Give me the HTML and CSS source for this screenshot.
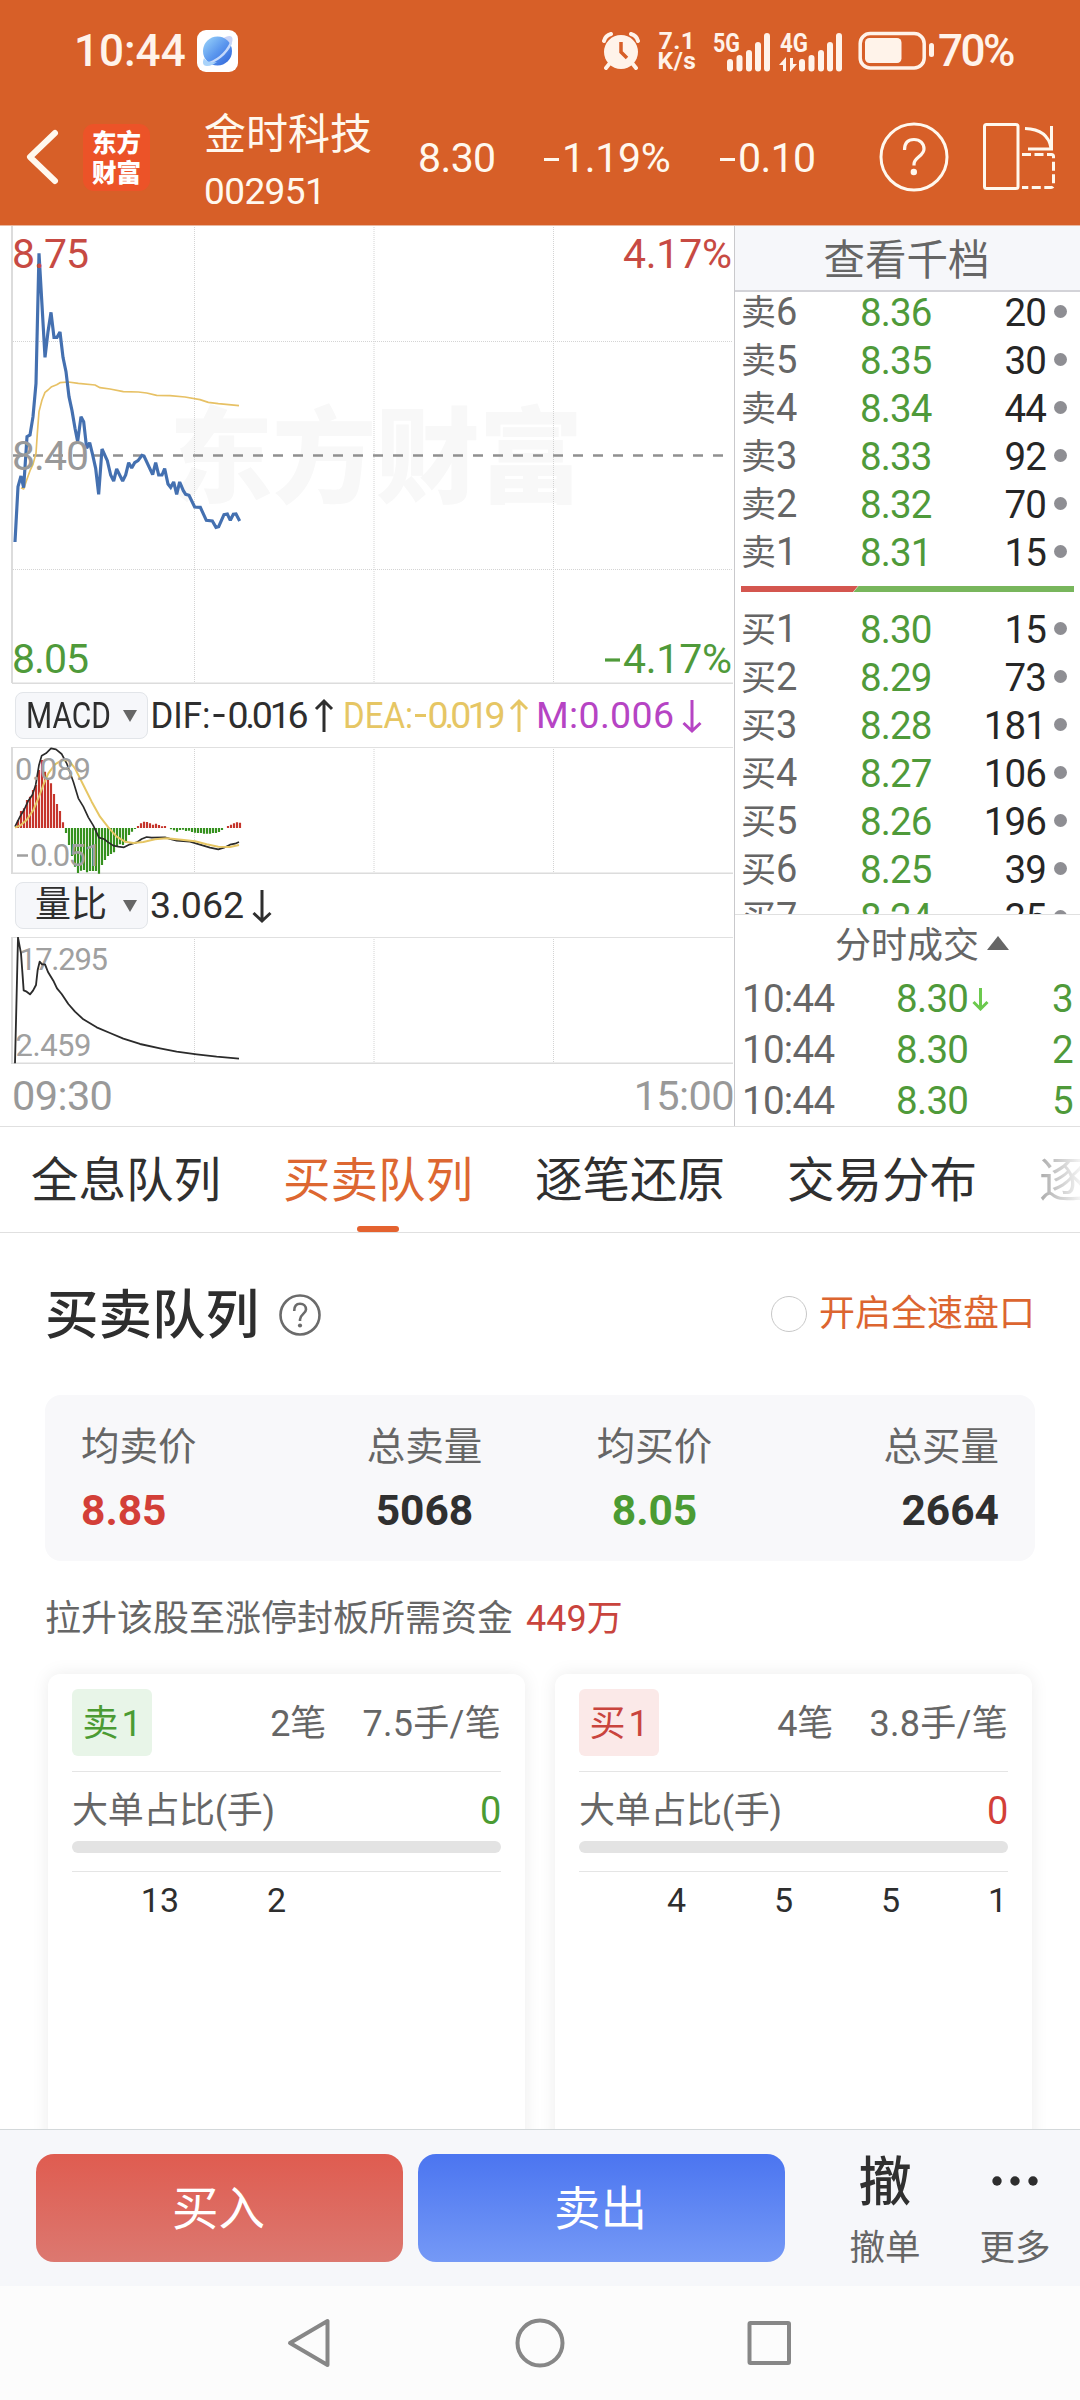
FILE: index.html
```html
<!DOCTYPE html>
<html lang="zh-CN">
<head>
<meta charset="utf-8">
<title>金时科技 002951</title>
<link rel="stylesheet" href="styles.css">
</head>
<body>
<div class="screen">
  <header class="top">
    <div class="status">
      <span class="clock">10:44</span>
      <svg class="app-badge" width="42" height="42" viewBox="0 0 42 42">
        <defs><linearGradient id="planet" x1="0" y1="0" x2="1" y2="1"><stop offset="0" stop-color="#9ed8fb"/><stop offset=".5" stop-color="#5b97ee"/><stop offset="1" stop-color="#2c62d8"/></linearGradient></defs>
        <rect width="41" height="42" rx="9" fill="#fff"/>
        <path d="M25 9C31 5 36 5 35.500 10C35 15 31 20 26 25Z" fill="#c9d4f6"/>
        <circle cx="20.500" cy="21" r="14.500" fill="url(#planet)"/>
        <path d="M34 13C29 24 19 32 8 34" fill="none" stroke="#c4d9fb" stroke-width="2.500"/>
        <path d="M7 28C5 33 6 36 10 36C14 36 17 34 20 32C15 33 9 32 7 28Z" fill="#a9d3fa"/>
      </svg>
      <svg class="alarm" width="38" height="38" viewBox="0 0 38 38">
        <g fill="none" stroke="#fff3ea" stroke-width="4" stroke-linecap="round"><path d="M2 9C3 5 5 3 9 2M29 2C33 3 35 5 36 9M8 31L4 36M30 31L34 36"/></g>
        <circle cx="19" cy="20" r="17" fill="#fff3ea"/>
        <path d="M19 10V20L25 26" fill="none" stroke="#d75f28" stroke-width="3.500"/>
      </svg>
      <span class="speed"><span>7.1</span><span>K/s</span></span>
      <svg class="cell" width="58" height="42" viewBox="712 29 58 42">
        <text x="713" y="51" class="net" textLength="27" lengthAdjust="spacingAndGlyphs">5G</text>
        <path class="bars" d="M730 61V67.500M739.500 57V67.500M749 52V67.500M758 44V67.500M767 35V67.500"/>
      </svg>
      <svg class="cell2" width="65" height="42" viewBox="780 29 65 42">
        <text x="781" y="51" class="net" textLength="28" lengthAdjust="spacingAndGlyphs">4G</text>
        <path class="bars" d="M803 61V67.500M812.500 57V67.500M822 52V67.500M831 44V67.500M840 35V67.500"/>
        <path d="M787 70V56L780 64H784V70ZM791 57V71L798 63H794V57Z" fill="#fff3ea"/>
      </svg>
      <svg class="battery" width="78" height="40" viewBox="857 31 78 40">
        <rect x="860.200" y="33.500" width="64" height="34.500" rx="10" fill="none" stroke="#fff3ea" stroke-width="3.500"/>
        <rect x="865" y="38" width="36.500" height="25" rx="4.500" fill="#fff3ea"/>
        <rect x="929" y="43" width="5" height="14" rx="2.500" fill="#fff3ea"/>
      </svg>
      <span class="percent">70%</span>
    </div>
    <div class="nav">
      <svg class="back" width="36" height="60" viewBox="0 0 36 60"><path d="M31 6L6 30L31 54" fill="none" stroke="#fff8ee" stroke-width="6" stroke-linecap="round" stroke-linejoin="round"/></svg>
      <div class="brand"><span>东方</span><span>财富</span></div>
      <div class="stock"><span class="stock-name">金时科技</span><span class="stock-code">002951</span></div>
      <span class="quote q-price">8.30</span>
      <span class="quote q-rate"><i class="minus"></i>1.19%</span>
      <span class="quote q-diff"><i class="minus"></i>0.10</span>
      <svg class="help" width="70" height="70" viewBox="0 0 70 70"><circle cx="35" cy="35" r="33" fill="none" stroke="#fff8ee" stroke-width="3"/><path d="M25.500 28C25.500 21 29 17.500 35 17.500C41 17.500 45 21.500 45 27C45 34 35 35.500 35 42V43.500" fill="none" stroke="#fff8ee" stroke-width="3.200"/><circle cx="34.800" cy="50" r="3.200" fill="#fff8ee"/></svg>
      <svg class="rotate" width="74" height="70" viewBox="981 123 74 70" fill="none" stroke="#fff8ee" stroke-width="3"><rect x="983.500" y="125.500" width="33.500" height="64" rx="2"/><path d="M1024 129.500C1039 130 1048 137 1050 149M1050.500 127V150H1027"/><path d="M1021 155.500H1050.500Q1052.500 155.500 1052.500 157.500V186Q1052.500 188.500 1050 188.500H1021" stroke-dasharray="9 3.500"/></svg>
    </div>
  </header>

  <main class="market">
    <section class="charts">
      <svg class="plot" width="734" height="458" viewBox="0 226 734 458">
        <text class="watermark" x="169" y="495" textLength="414">东方财富</text>
        <path class="grid" d="M194.500 227V683M374 227V683M553.500 227V683M13 341.500H733M13 569.500H733"/>
        <path class="frame" d="M12 226V683M12 683.500H733"/>
        <path d="M13 455.500H733" stroke="#909090" stroke-width="2.500" stroke-dasharray="10 10"/>
        <g transform="translate(0 220) scale(.33333)" fill="none" stroke-linejoin="round">
          <path stroke="#e7c165" stroke-width="5" d="M63 803L71 807L80 780L90 752L99 733L108 700L112 640L117 575L126 540L135 517L144 510L155 500L170 494L180 488L205 486L235 490L285 495L300 503L330 507L370 515L415 516L440 519L470 526L510 527L555 531L600 539L625 547L655 551L717 557"/>
          <path stroke="#4470b0" stroke-width="9.500" stroke-linejoin="miter" stroke-miterlimit="2" d="M45 966L54 800L63 768L71 803L81 650L90 645L99 590L108 490L117 100L126 255L135 412L144 335L153 277L162 352L171 352L180 336L189 412L198 455L207 530L216 572L225 625L233 665L243 590L251 605L260 685L269 668L278 705L287 745L296 823L306 687L322 722L332 765L341 783L350 747L368 783L377 765L386 728L395 744L404 728L414 722L426 706L432 708L458 764L467 728L476 765L486 765L494 746L504 792L512 802L521 786L530 823L539 786L550 812L557 823L567 826L584 861L601 862L619 901L637 903L648 922L656 920L672 884L682 882L691 901L700 883L708 882L719 903"/>
        </g>
        <g class="axis">
          <text x="12" y="268" textLength="77" class="up">8.75</text>
          <text x="12" y="469.500" textLength="77" class="flat">8.40</text>
          <text x="12" y="672.500" textLength="77" class="down">8.05</text>
          <text x="623" y="268" textLength="109" class="up">4.17%</text>
          <text x="623" y="672.500" textLength="109" class="down">4.17%</text>
          <path d="M605 660H620" stroke="#4f9a3a" stroke-width="3.200"/>
        </g>
      </svg>

      <div class="indicator">
        <div class="picker"><span class="picker-latin">MACD</span><i class="caret"></i></div>
        <svg class="legend" width="580" height="62" viewBox="150 685 580 62">
          <g fill="#2e2e2e"><text x="150.500" y="728" textLength="60" lengthAdjust="spacingAndGlyphs">DIF:</text><text x="227.500" y="728" textLength="81">0.016</text><path d="M213.500 715.500H224.500M324 732V701M316 709L324 701L332 709" stroke="#2e2e2e"/></g>
          <g fill="#e6c664"><text x="343" y="728" textLength="70" lengthAdjust="spacingAndGlyphs">DEA:</text><text x="427.500" y="728" textLength="78">0.019</text><path d="M415 715.500H426M519 732V701M511 709L519 701L527 709" stroke="#e6c664"/></g>
          <g fill="#b644c4"><text x="536" y="728" textLength="138">M:0.006</text><path d="M692 700V731M683.500 723L692 731L700.500 723" stroke="#b644c4"/></g>
        </svg>
      </div>

      <svg class="plot" width="734" height="127" viewBox="0 747 734 127">
        <path class="grid" d="M194.500 747V873M374 747V873M553.500 747V873"/>
        <path class="edge" d="M12 747.500H733"/>
        <path class="frame" d="M12 747V873.500H733"/>
        <g transform="translate(0 680) scale(.33333)" fill="none" stroke-linejoin="round">
          <path stroke="#c5352c" stroke-width="6.500" d="M54 444V420M63 444V393M72 444V385M81 444V360M90 444V350M99 444V330M108 444V315M117 444V270M126 444V240M135 444V275M144 444V295M153 444V310M162 444V342M171 444V372M180 444V393M189 444V427M414 444V438M423 444V430M432 444V425M441 444V426M450 444V430M459 444V434M468 444V431M477 444V435M486 444V439M495 444V438M684 444V438M693 444V434M702 444V430M711 444V427M720 444V428"/>
          <path stroke="#36911f" stroke-width="6.500" d="M198 444V459M207 444V495M216 444V528M225 444V560M234 444V579M243 444V572M252 444V570M261 444V577M270 444V573M279 444V573M288 444V573M297 444V581M306 444V555M315 444V540M324 444V528M333 444V522M342 444V517M351 444V500M360 444V493M369 444V495M378 444V487M387 444V465M396 444V455M405 444V447M513 444V448M522 444V451M531 444V455M540 444V450M549 444V449M558 444V453M567 444V452M576 444V456M585 444V458M594 444V459M603 444V459M612 444V461M621 444V461M630 444V461M639 444V459M648 444V459M657 444V456M666 444V450"/>
          <path stroke="#2b2b2b" stroke-width="5" d="M45 440L60 410L72 390L85 362L97 345L107 315L117 255L125 227L138 220L153 205L168 208L185 222L200 250L220 305L235 355L250 380L265 412L280 437L297 473L312 477L325 487L340 497L355 500L372 502L390 493L410 487L425 477L440 471L455 473L495 472L515 478L530 482L570 485L600 494L630 503L655 508L672 503L690 494L705 491L717 486"/>
          <path stroke="#e6c664" stroke-width="6" d="M45 443L60 437L80 420L100 390L115 355L130 315L145 280L165 253L185 241L205 240L225 265L250 315L275 365L300 410L325 442L350 470L375 485L400 489L430 486L465 478L500 475L545 479L585 484L620 493L655 500L690 501L717 495"/>
        </g>
        <g class="scale"><text x="15" y="779.500" textLength="76">0.089</text><text x="30" y="865.500" textLength="72">0.051</text><path d="M17 855.500H28" stroke="#a0a0a0" stroke-width="2.500"/></g>
      </svg>

      <div class="indicator">
        <div class="picker"><span class="picker-han">量比</span><i class="caret"></i></div>
        <svg class="legend" width="580" height="62" viewBox="150 875 580 62">
          <g fill="#2e2e2e"><text x="150" y="918" textLength="94">3.062</text><path d="M262 890V921M253.500 913L262 921L270.500 913" stroke="#2e2e2e"/></g>
        </svg>
      </div>

      <svg class="plot" width="734" height="127" viewBox="0 937 734 127">
        <path class="grid" d="M194.500 937V1063M374 937V1063M553.500 937V1063"/>
        <path class="edge" d="M12 937.500H733"/>
        <path class="frame" d="M12 937V1063.500H733"/>
        <g class="scale"><text x="19" y="969.500" textLength="89">17.295</text><text x="15.500" y="1055.500" textLength="76">2.459</text></g>
        <g transform="translate(0 680) scale(.33333)" fill="none" stroke-linejoin="round">
          <path stroke="#2b2b2b" stroke-width="5.500" d="M45 1150L54 773L63 820L67 875L71 931L80 935L90 943L99 932L108 915L113 870L119 845L126 853L135 853L144 876L160 902L171 925L185 942L205 972L225 995L250 1018L290 1042L330 1059L370 1076L420 1092L480 1105L530 1115L590 1123L650 1130L717 1136"/>
        </g>
      </svg>
      <div class="times"><span>09:30</span><span>15:00</span></div>
    </section>

    <aside class="book">
      <div class="book-head">查看千档</div>
      <div class="book-list">
        <ul class="levels">
          <li><b>卖<em>6</em></b><span>8.36</span><strong>20</strong><i></i></li>
          <li><b>卖<em>5</em></b><span>8.35</span><strong>30</strong><i></i></li>
          <li><b>卖<em>4</em></b><span>8.34</span><strong>44</strong><i></i></li>
          <li><b>卖<em>3</em></b><span>8.33</span><strong>92</strong><i></i></li>
          <li><b>卖<em>2</em></b><span>8.32</span><strong>70</strong><i></i></li>
          <li><b>卖<em>1</em></b><span>8.31</span><strong>15</strong><i></i></li>
        </ul>
        <svg class="ratio" width="333" height="6" viewBox="0 0 333 6"><path d="M0 0H117L112 6H0Z" fill="#d4564f"/><path d="M117.500 0H333V6H112.500Z" fill="#78b65c"/></svg>
        <ul class="levels">
          <li><b>买<em>1</em></b><span>8.30</span><strong>15</strong><i></i></li>
          <li><b>买<em>2</em></b><span>8.29</span><strong>73</strong><i></i></li>
          <li><b>买<em>3</em></b><span>8.28</span><strong>181</strong><i></i></li>
          <li><b>买<em>4</em></b><span>8.27</span><strong>106</strong><i></i></li>
          <li><b>买<em>5</em></b><span>8.26</span><strong>196</strong><i></i></li>
          <li><b>买<em>6</em></b><span>8.25</span><strong>39</strong><i></i></li>
          <li><b>买<em>7</em></b><span>8.24</span><strong>35</strong><i></i></li>
        </ul>
      </div>
      <div class="ticks">
        <div class="ticks-head">分时成交<i></i></div>
        <ul>
          <li><span>10:44</span><b>8.30</b><svg width="17" height="24" viewBox="0 0 17 24"><path d="M8.500 1V22M1.500 15L8.500 22L15.500 15" fill="none" stroke="#6cc94e" stroke-width="3"/></svg><strong>3</strong></li>
          <li><span>10:44</span><b>8.30</b><strong>2</strong></li>
          <li><span>10:44</span><b>8.30</b><strong>5</strong></li>
        </ul>
      </div>
    </aside>
  </main>

  <nav class="tabs">
    <span>全息队列</span><span class="active">买卖队列</span><span>逐笔还原</span><span>交易分布</span><span class="fade">逐笔</span>
  </nav>

  <section class="queue">
    <div class="queue-head">
      <h1>买卖队列</h1>
      <svg width="42" height="42" viewBox="0 0 42 42"><circle cx="21" cy="21" r="19.500" fill="none" stroke="#6b6b6b" stroke-width="2.600"/><path d="M15.200 17C15.200 12 17.500 9.800 21 9.800C24.800 9.800 27 12.200 27 15.500C27 19.500 21 20.500 21 25.500V27" fill="none" stroke="#6b6b6b" stroke-width="2.600"/><circle cx="21" cy="31.500" r="2.100" fill="#6b6b6b"/></svg>
      <label><i></i>开启全速盘口</label>
    </div>
    <div class="summary">
      <div class="cell-start"><span>均卖价</span><b class="red">8.85</b></div>
      <div><span>总卖量</span><b>5068</b></div>
      <div><span>均买价</span><b class="green">8.05</b></div>
      <div class="cell-end"><span>总买量</span><b>2664</b></div>
    </div>
    <p class="capital">拉升该股至涨停封板所需资金<em>449万</em></p>
    <div class="cards">
      <article>
        <div class="card-top"><span class="tag sell">卖<em>1</em></span><span class="count">2笔</span><span class="avg">7.5手/笔</span></div>
        <div class="big"><span>大单占比(手)</span><b class="green">0</b></div>
        <div class="track"></div>
        <div class="orders"><span>13</span><span>2</span></div>
      </article>
      <article>
        <div class="card-top"><span class="tag buy">买<em>1</em></span><span class="count">4笔</span><span class="avg">3.8手/笔</span></div>
        <div class="big"><span>大单占比(手)</span><b class="red">0</b></div>
        <div class="track"></div>
        <div class="orders"><span>4</span><span>5</span><span>5</span><span>1</span></div>
      </article>
    </div>
  </section>

  <footer class="trade">
    <button class="buy-btn">买入</button>
    <button class="sell-btn">卖出</button>
    <div class="action"><span class="glyph">撤</span><span>撤单</span></div>
    <div class="action more"><svg class="glyph" width="54" height="54" viewBox="0 0 54 54" fill="#2e2e2e"><circle cx="9" cy="27" r="4.700"/><circle cx="27" cy="27" r="4.700"/><circle cx="45" cy="27" r="4.700"/></svg><span>更多</span></div>
  </footer>
  <div class="system">
    <svg width="1080" height="114" viewBox="0 2286 1080 114" fill="none" stroke="#878787" stroke-width="4" stroke-linejoin="round"><path d="M290 2343L327.500 2321V2365Z"/><circle cx="540" cy="2343" r="22.500"/><rect x="749.500" y="2323" width="39.500" height="40" rx="1"/></svg>
  </div>
</div>
</body>
</html>
```
FILE: styles.css
```css
* { box-sizing: border-box; margin: 0; padding: 0; }
body { width: 1080px; height: 2400px; background: #fff; overflow: hidden; font-family: Roboto, "Noto Sans CJK SC", sans-serif; color: #2e2e2e; }
i, em { font-style: normal; }
ul { list-style: none; }
svg { display: block; flex: none; }
.screen { width: 1080px; height: 2400px; display: flex; flex-direction: column; overflow: hidden; }
.screen > * { flex: none; }
.red { color: #d33f38; }
.green { color: #4b9b33; }

/* Status bar and stock header */
.top { height: 226px; background: #d75f28; border-bottom: 1px solid #e9b79f; color: #fff8ee; }
.status { height: 100px; padding: 2px 0 0 74px; display: flex; align-items: center; color: #fff3ea; font-weight: 500; }
.clock { width: 123px; font-size: 44px; line-height: 50px; }
.alarm { margin-left: 363px; }
.speed { display: flex; flex-direction: column; align-items: center; width: 44px; margin: 0 0 0 15px; font-size: 24.500px; line-height: 20px; font-weight: 700; letter-spacing: .5px; }
.cell { margin-left: 13px; }
.cell2 { margin-left: 9px; }
.net { font-size: 25px; font-weight: 700; fill: #fff3ea; }
.bars { stroke: #fff3ea; stroke-width: 6; stroke-linecap: round; }
.battery { margin-left: 13px; }
.percent { margin-left: 3px; font-size: 44px; line-height: 50px; letter-spacing: -2.500px; }
.nav { height: 125px; display: flex; align-items: center; padding-left: 24px; padding-bottom: 11px; }
.back { width: 36px; }
.brand { margin-left: 23px; width: 67px; height: 67px; border-radius: 11px; background: #ec5328; display: flex; flex-direction: column; align-items: center; padding-top: 3px; font: 900 24.500px/30px "Noto Sans CJK SC", sans-serif; color: #fff; }
.stock { display: flex; flex-direction: column; width: 214px; margin-left: 54px; padding-top: 6px; }
.stock-name { font-size: 42px; line-height: 58px; }
.stock-code { font-size: 37px; line-height: 44px; letter-spacing: -.6px; padding-top: 6px; }
.quote { font-size: 41px; line-height: 50px; display: flex; align-items: center; padding-top: 2px; }
.q-price { width: 126px; letter-spacing: -.6px; }
.q-rate { width: 176px; letter-spacing: -.3px; }
.q-diff { width: 159px; letter-spacing: -.6px; }
.minus { width: 15px; height: 3px; background: #fff8ee; margin-right: 3px; margin-top: 2px; }
.rotate { margin-left: 33px; }

/* Charts */
.market { display: flex; height: 901px; border-bottom: 1px solid #e0e0e0; }
.charts { width: 734px; flex: none; display: flex; flex-direction: column; }
.watermark { font-family: "Noto Sans CJK SC", sans-serif; font-weight: 900; font-size: 104px; fill: #f8f8f8; }
.grid { fill: none; stroke: #d4d4d4; stroke-width: 1; stroke-dasharray: 1 1; }
.frame { fill: none; stroke: #dcdcdc; stroke-width: 2; }
.edge { stroke: #e0e0e0; stroke-width: 1; }
.axis { font-size: 41px; }
.up { fill: #c74a43; }
.flat { fill: #999; }
.down { fill: #4f9a3a; }
.scale { font-size: 31px; fill: #a0a0a0; }
.indicator { height: 63px; display: flex; align-items: center; padding-left: 15px; }
.picker { width: 133px; height: 47px; border: 1px solid #e2e5e9; border-radius: 8px; background: #f6f7fa; display: flex; align-items: center; flex: none; }
.picker-latin { width: 86px; margin-left: 10px; font-size: 37px; line-height: 45px; transform: scaleX(.81); transform-origin: left; }
.picker-han { width: 86px; margin-left: 19px; margin-right: -9px; font-size: 36px; line-height: 47px; white-space: nowrap; }
.caret { margin-left: 11px; border: 7px solid transparent; border-top: 12px solid #666; border-bottom: 0; }
.legend { margin-left: 2px; font-size: 37.500px; }
.legend path { fill: none; stroke-width: 3; }
.times { height: 61px; padding: 2px 0 0 12px; display: flex; justify-content: space-between; font-size: 41.500px; line-height: 60px; color: #999; letter-spacing: -.6px; }

/* Order book */
.book { width: 346px; flex: none; border-left: 1px solid #c9c9cc; display: flex; flex-direction: column; }
.book-head { height: 66px; background: #f6f7fa; border-bottom: 2px solid #d3d3d8; text-align: center; font-size: 41.500px; line-height: 69px; color: #666; padding-right: 2px; }
.book-list { height: 624px; overflow: hidden; border-bottom: 1px solid #e0e0e0; font-size: 38.500px; letter-spacing: -.9px; }
.levels li { height: 48px; display: flex; align-items: center; line-height: 48px; padding-left: 6px; white-space: nowrap; }
.levels:first-child { margin-top: -3px; }
.levels b { width: 119px; font-weight: 400; font-size: 35px; color: #666; letter-spacing: 0; }
.levels em { font-size: 38px; }
.levels span { width: 92px; color: #4f9a3a; }
.levels strong { width: 94px; font-weight: 400; text-align: right; color: #262626; }
.levels i { width: 13px; height: 13px; border-radius: 50%; background: #8e8e93; margin: 0 0 4px 8px; }
.ratio { margin: 9px 0 14px 6px; }
.ticks { flex: 1; padding-top: 3px; }
.ticks-head { height: 55px; display: flex; align-items: center; justify-content: center; font-size: 36px; line-height: 54px; color: #666; padding-left: 29px; }
.ticks-head i { border: 11px solid transparent; border-bottom: 14px solid #666; border-top: 0; margin: 0 0 5px 8px; }
.ticks li { height: 51px; display: flex; align-items: center; font-size: 38.500px; line-height: 51px; letter-spacing: -.7px; padding-left: 7px; color: #4f9a3a; }
.ticks li span { width: 154px; color: #666; }
.ticks li b { font-weight: 400; width: 76px; }
.ticks li strong { font-weight: 400; margin-left: auto; margin-right: 7px; }

/* Tabs */
.tabs { height: 106px; border-bottom: 1px solid #e0e0e0; padding-left: 31px; display: flex; gap: 60px; font-size: 47.500px; line-height: 109px; white-space: nowrap; overflow: hidden; color: #303030; }
.tabs span { width: 192px; flex: none; position: relative; }
.tabs .active { color: #dd6731; }
.tabs .active::after { content: ""; position: absolute; left: 74px; top: 99px; width: 42px; height: 6px; border-radius: 3px; background: #e4622f; }
.tabs .fade { background: linear-gradient(90deg, #aaa 0, #f4f4f4 42px, #fff 48px); -webkit-background-clip: text; background-clip: text; color: transparent; }

/* Queue */
.queue { height: 896px; padding: 0 45px; overflow: hidden; }
.queue-head { height: 162px; display: flex; align-items: center; }
.queue-head h1 { font-size: 53.500px; font-weight: 500; line-height: 80px; margin-right: 20px; padding-top: 3px; }
.queue-head svg { margin-top: 1px; }
.queue-head label { margin-left: auto; display: flex; align-items: center; gap: 12px; font-size: 36px; line-height: 40px; color: #dc6530; }
.queue-head label i { width: 36px; height: 36px; border: 1.500px solid #c8c8c8; border-radius: 50%; }
.summary { height: 166px; border-radius: 16px; background: #f8f8fa; padding: 20px 36px 0; display: flex; }
.summary div { width: 117px; display: flex; flex-direction: column; align-items: center; font-size: 38.500px; line-height: 64px; color: #666; white-space: nowrap; }
.summary div:nth-child(2) { margin-left: 168px; margin-right: 113px; }
.summary div:nth-child(3) { margin-right: 169px; }
.summary b { font-size: 42.500px; color: #303030; }
.summary b.red { color: #d33f38; }
.summary b.green { color: #4b9b33; }
.summary .cell-start { align-items: flex-start; }
.summary .cell-end { align-items: flex-end; }
.capital { height: 113px; line-height: 116px; font-size: 36px; color: #666; }
.capital em { color: #c9443d; margin-left: 13px; }
.cards { display: flex; gap: 30px; padding: 0 3px; }
.cards article { width: 477px; height: 500px; padding: 15px 24px; border-radius: 12px; background: #fff; box-shadow: 0 0 18px rgba(0,0,0,.08); }
.card-top { height: 83px; border-bottom: 1px solid #e5e5e5; display: flex; align-items: flex-start; font-size: 36px; line-height: 71px; color: #666; padding-bottom: 15px; }
.tag { width: 80px; height: 67px; border-radius: 6px; text-align: center; }
.tag em { margin-left: 3px; }
.sell { background: #e8f5e8; color: #4b9b33; }
.buy { background: #fbe9e8; color: #c9443d; }
.count { margin-left: auto; margin-right: 36px; }
.avg { letter-spacing: .3px; }
.big { height: 69px; display: flex; justify-content: space-between; font-size: 36px; line-height: 78px; color: #666; letter-spacing: -.3px; }
.big b { font-weight: 400; font-size: 38px; }
.track { height: 12px; border-radius: 6px; background: #e3e3e3; }
.orders { margin-top: 18px; border-top: 1px solid #e5e5e5; display: grid; grid-template-columns: repeat(4, 1fr); text-align: right; font-size: 34px; line-height: 57px; padding-right: 1px; }

/* Bottom bars */
.trade { height: 157px; border-top: 1px solid #d3d8da; background: #f6f7fa; padding: 24px 0 0 36px; display: flex; }
.trade button { width: 367px; height: 108px; border: 0; border-radius: 18px; color: #fff; font: 400 46.500px/110px Roboto, "Noto Sans CJK SC", sans-serif; margin-right: 15px; padding-right: 2px; }
.buy-btn { background: linear-gradient(#df5c50, #dc7870); }
.sell-btn { background: linear-gradient(#4b75f0, #7599f6); }
.action { width: 130px; margin-left: 20px; display: flex; flex-direction: column; align-items: center; font-size: 35.500px; line-height: 50px; color: #666; }
.action.more { margin-left: 0; }
.action .glyph { font-size: 53px; height: 54px; line-height: 58px; font-weight: 500; color: #303030; margin-bottom: 15px; }
.system { height: 114px; background: #fcfcfc; }
```
